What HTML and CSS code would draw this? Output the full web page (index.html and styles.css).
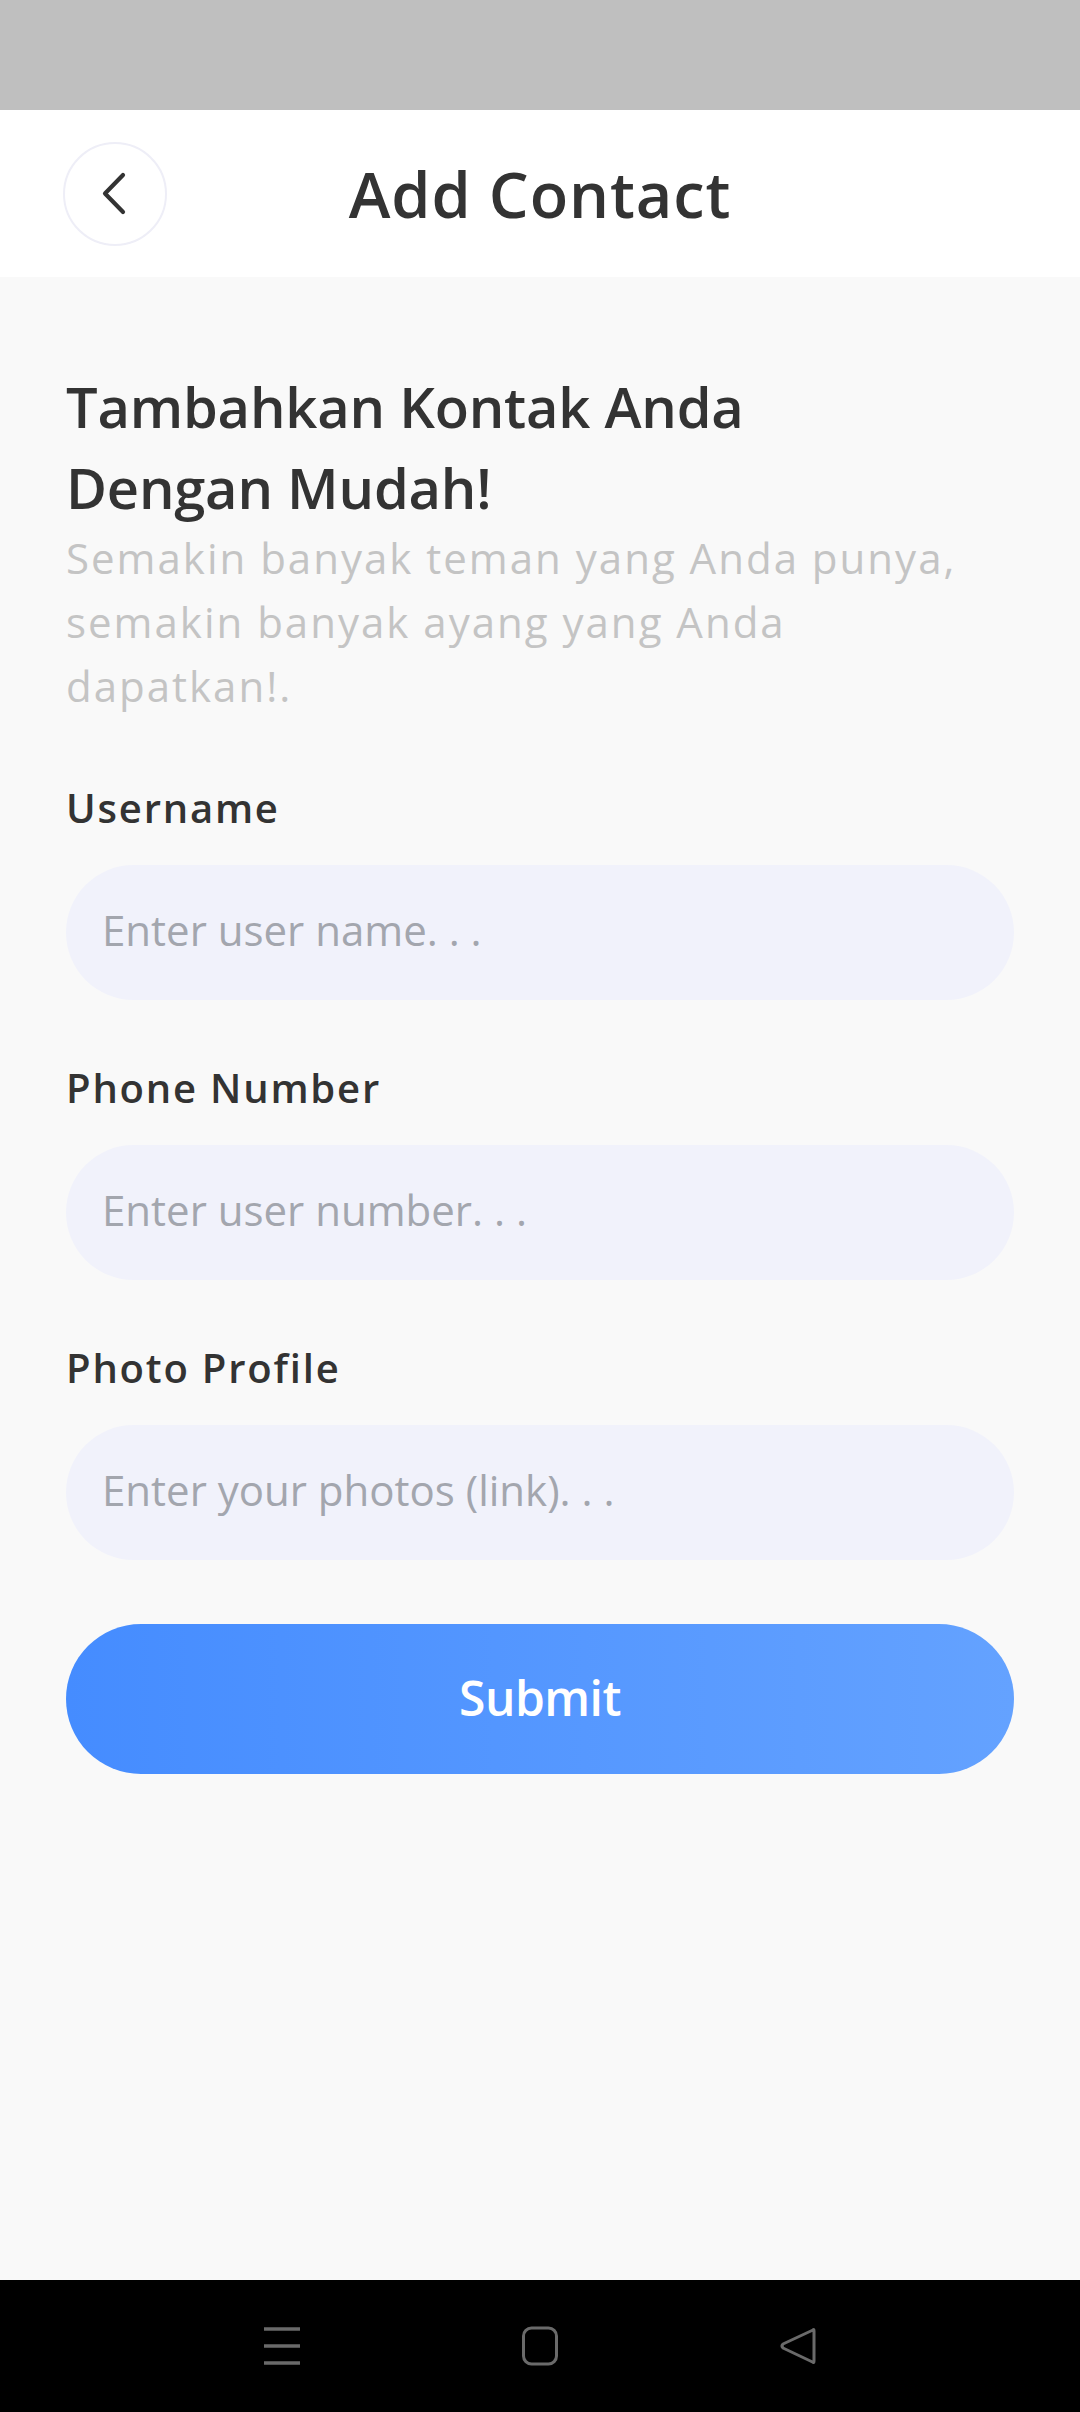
FILE: index.html
```html
<!DOCTYPE html>
<html lang="id">
<head>
<meta charset="utf-8">
<title>Add Contact</title>
<link rel="stylesheet" href="styles.css">
</head>
<body>
<div class="screen">
  <div class="status-bar"></div>
  <header class="app-header">
    <button class="back-btn" aria-label="Back">
      <svg width="27" height="45" viewBox="0 0 27 45"><polyline points="23,4 5,22.5 23,41" fill="none" stroke="#333333" stroke-width="4.2" stroke-linecap="round" stroke-linejoin="round"/></svg>
    </button>
    <h1 class="app-title">Add Contact</h1>
    <span class="header-spacer"></span>
  </header>
  <main class="content">
    <section class="intro">
      <h2 class="headline">Tambahkan Kontak Anda<br>Dengan Mudah!</h2>
      <p class="subtitle">Semakin banyak teman yang Anda punya, semakin banyak ayang yang Anda dapatkan!.</p>
    </section>
    <form class="form">
      <label class="field">
        <span class="field-label">Username</span>
        <input class="field-input" type="text" placeholder="Enter user name. . .">
      </label>
      <label class="field">
        <span class="field-label">Phone Number</span>
        <input class="field-input" type="text" placeholder="Enter user number. . .">
      </label>
      <label class="field">
        <span class="field-label">Photo Profile</span>
        <input class="field-input" type="text" placeholder="Enter your photos (link). . .">
      </label>
      <button class="submit-btn" type="button">Submit</button>
    </form>
  </main>
  <nav class="nav-bar">
    <svg class="nav-icon" width="40" height="40" viewBox="0 0 40 40"><g stroke="#6a6a6a" stroke-width="3.4"><line x1="2" y1="3" x2="38" y2="3"/><line x1="2" y1="20" x2="38" y2="20"/><line x1="2" y1="37" x2="38" y2="37"/></g></svg>
    <svg class="nav-icon" width="40" height="40" viewBox="0 0 40 40"><rect x="3.5" y="2" width="33" height="36" rx="8" fill="none" stroke="#6a6a6a" stroke-width="3"/></svg>
    <svg class="nav-icon" width="40" height="40" viewBox="0 0 40 40"><path d="M35 4 Q36 2.5 36 5 L36 35 Q36 37.5 34.5 36 L5 22 Q3 20 5 18 Z" fill="none" stroke="#6a6a6a" stroke-width="3" stroke-linejoin="round"/></svg>
  </nav>
</div>
</body>
</html>
```

FILE: styles.css
```css
* {
  box-sizing: border-box;
}

html, body {
  margin: 0;
  padding: 0;
}

body {
  font-family: "Open Sans", "Noto Sans", sans-serif;
  color: #333333;
  background: #f9f9f9;
}

.screen {
  width: 1080px;
  height: 2412px;
  display: flex;
  flex-direction: column;
  background: #f9f9f9;
}

.status-bar {
  height: 110px;
  flex: none;
  background: #bfbfbf;
}

.app-header {
  height: 167px;
  flex: none;
  background: #ffffff;
  display: flex;
  align-items: center;
  padding: 0 63px;
}

.back-btn {
  width: 104px;
  height: 104px;
  border-radius: 50%;
  border: 2px solid #eeeef7;
  background: #ffffff;
  display: flex;
  align-items: center;
  justify-content: center;
  padding: 0 4px 0 0;
  flex: none;
}

.app-title {
  flex: 1;
  margin: 0;
  text-align: center;
  font-size: 63px;
  font-weight: 600;
  letter-spacing: 0.9px;
  color: #333333;
  line-height: 1;
}

.header-spacer {
  width: 104px;
  flex: none;
}

.content {
  flex: 1;
  padding: 89px 66px 0 66px;
}

.intro {
  margin: 0;
}

.headline {
  margin: 0;
  font-size: 56px;
  font-weight: 600;
  line-height: 81px;
  letter-spacing: -0.2px;
  color: #333333;
}

.subtitle {
  margin: -2px 0 0 0;
  font-size: 42px;
  font-weight: 400;
  line-height: 64px;
  letter-spacing: 2px;
  color: #c4c4c4;
}

.form {
  margin-top: 63px;
  display: flex;
  flex-direction: column;
  gap: 61px;
}

.field {
  display: flex;
  flex-direction: column;
  gap: 30px;
}

.field-label {
  font-size: 40px;
  font-weight: 600;
  line-height: 54px;
  letter-spacing: 1.8px;
  color: #333333;
}

.field-input {
  height: 135px;
  width: 948px;
  border: none;
  outline: none;
  border-radius: 68px;
  background: #f1f2fb;
  padding: 0 36px 6px 36px;
  font-family: "Open Sans", "Noto Sans", sans-serif;
  font-size: 42px;
  color: #333333;
}

.field-input::placeholder {
  color: #a3a6ae;
  opacity: 1;
}

.submit-btn {
  margin-top: 3px;
  height: 150px;
  width: 948px;
  border: none;
  border-radius: 75px;
  background: linear-gradient(90deg, #458cff 0%, #64a2ff 100%);
  color: #ffffff;
  font-family: "Open Sans", "Noto Sans", sans-serif;
  font-size: 48px;
  font-weight: 600;
  letter-spacing: -0.5px;
  padding: 0 0 4px 0;
}

.nav-bar {
  height: 132px;
  flex: none;
  background: #000000;
  display: flex;
  align-items: center;
  justify-content: center;
  gap: 218px;
}

.nav-icon {
  display: block;
}
```
